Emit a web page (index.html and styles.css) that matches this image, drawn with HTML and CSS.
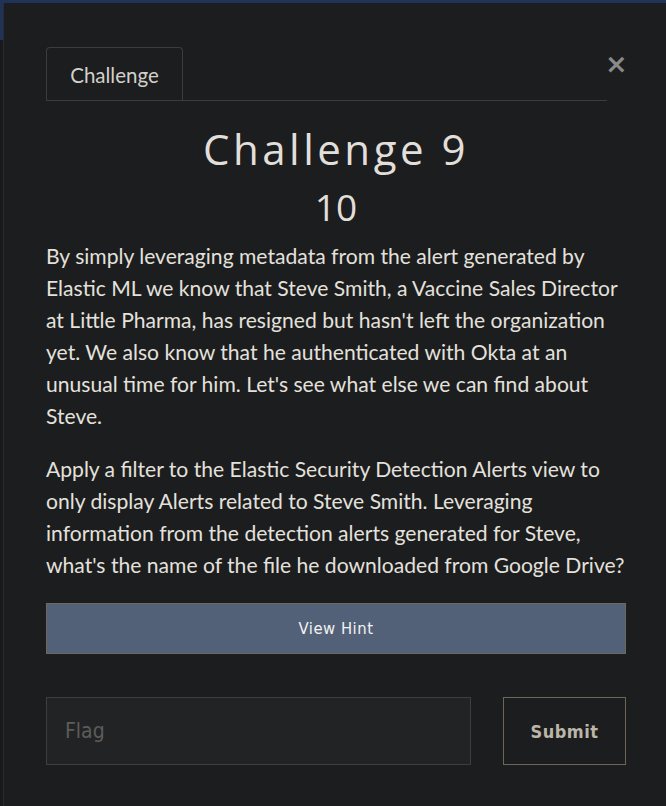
FILE: index.html
```html
<!DOCTYPE html>
<html>
<head>
<meta charset="utf-8">
<link rel="stylesheet" href="styles.css">
</head>
<body>
<div class="page-top"></div>
<div class="modal">
  <div class="modal-head">
    <div class="tabs">
      <div class="tab">Challenge</div>
    </div>
    <button class="close" aria-label="Close">&times;</button>
  </div>
  <h2 class="title">Challenge 9</h2>
  <div class="points">10</div>
  <div class="desc">
    <p>By simply leveraging metadata from the alert generated by Elastic ML we know that Steve Smith, a Vaccine Sales Director at Little Pharma, has resigned but hasn't left the organization yet. We also know that he authenticated with Okta at an unusual time for him. Let's see what else we can find about Steve.</p>
    <p>Apply a filter to the Elastic Security Detection Alerts view to only display Alerts related to Steve Smith. Leveraging information from the detection alerts generated for Steve, what's the name of the file he downloaded from Google Drive?</p>
  </div>
  <button class="hint">View Hint</button>
  <form class="flag-row">
    <input class="flag" type="text" placeholder="Flag">
    <button class="submit" type="button">Submit</button>
  </form>
</div>
</body>
</html>
```

FILE: styles.css
```css
html, body {
  margin: 0;
  padding: 0;
  height: 100%;
  overflow: hidden;
}
body {
  background: #18191b;
  font-family: Lato, "Open Sans", sans-serif;
}
.page-top {
  height: 40px;
  background: #1f3257;
}
.modal {
  position: absolute;
  left: 3px;
  top: 3px;
  width: 700px;
  height: 900px;
  box-sizing: border-box;
  background: #1c1d1f;
  border-left: 1px solid #2b2c2f;
  padding: 44px 0 0 42px;
}
.modal-head {
  display: flex;
  width: 580px;
  position: relative;
}
.tabs {
  display: flex;
  width: 561px;
  border-bottom: 1px solid #3b3c3e;
}
.tab {
  width: 137px;
  height: 53px;
  box-sizing: border-box;
  border: 1px solid #3b3c3e;
  border-bottom: none;
  border-radius: 4px 4px 0 0;
  display: flex;
  align-items: center;
  justify-content: center;
  color: #d3d0ca;
  font-size: 20.5px;
  padding-top: 1px;
}
.close {
  position: absolute;
  right: 1px;
  top: 2px;
  background: none;
  border: none;
  color: #8a8a8a;
  font-size: 27px;
  font-weight: bold;
  font-family: "DejaVu Sans", sans-serif;
  line-height: 30px;
  padding: 0;
  width: 20px;
}
.title {
  width: 580px;
  margin: 23px 0 0 0;
  text-align: center;
  font-weight: normal;
  font-family: "Open Sans", sans-serif;
  font-size: 42px;
  letter-spacing: 3.5px;
  color: #e2dfda;
  line-height: 50px;
}
.points {
  width: 580px;
  text-align: center;
  font-family: "Open Sans", sans-serif;
  font-size: 37px;
  color: #e2dfda;
  line-height: 44px;
  margin-top: 11px;
}
.desc {
  width: 590px;
  color: #e4e1dc;
  font-size: 21.1px;
  line-height: 32px;
  margin-top: 11px;
}
.desc p {
  margin: 0 0 21px 0;
}
.hint {
  display: block;
  width: 580px;
  height: 51px;
  margin-top: 22px;
  background: #526177;
  border: 1px solid #6c6a5f;
  color: #f2f2f2;
  font-family: "DejaVu Sans Condensed", "DejaVu Sans", sans-serif;
  font-size: 16.5px;
  letter-spacing: 0.5px;
}
.flag-row {
  display: flex;
  gap: 32px;
  width: 580px;
  margin: 43px 0 0 0;
}
.flag {
  width: 425px;
  height: 68px;
  box-sizing: border-box;
  background: #222325;
  border: 1px solid #3d3e40;
  padding: 0 18px;
  color: #ccc;
  font-family: "DejaVu Sans Condensed", "DejaVu Sans", sans-serif;
  font-size: 21px;
  outline: none;
}
.flag::placeholder {
  color: #5e5c58;
}
.submit {
  width: 123px;
  height: 68px;
  box-sizing: border-box;
  background: transparent;
  border: 1px solid #6e6756;
  color: #bdb6a8;
  font-family: "DejaVu Sans Condensed", "DejaVu Sans", sans-serif;
  font-weight: bold;
  font-size: 18px;
  letter-spacing: 0.5px;
}
```
